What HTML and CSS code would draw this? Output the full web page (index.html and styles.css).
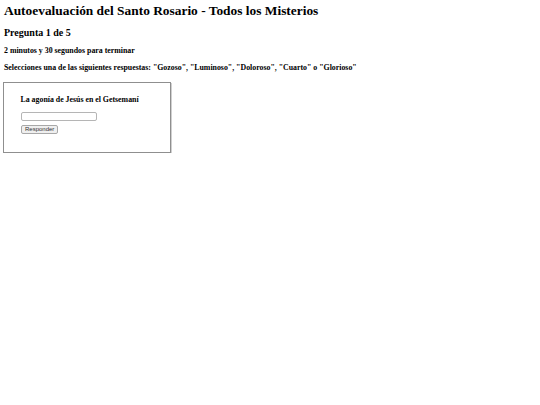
FILE: index.html
```html
<!DOCTYPE html>
<html lang="es">
<head>
<meta charset="utf-8">
<title>Autoevaluación del Santo Rosario</title>
<link rel="stylesheet" href="styles.css">
</head>
<body>
<main class="page">
  <h1 class="title">Autoevaluación del Santo Rosario - Todos los Misterios</h1>
  <h2 class="counter">Pregunta 1 de 5</h2>
  <p class="timer">2 minutos y 30 segundos para terminar</p>
  <p class="instructions">Selecciones una de las siguientes respuestas: "Gozoso", "Luminoso", "Doloroso", "Cuarto" o "Glorioso"</p>
  <form class="quiz-box">
    <p class="question">La agonía de Jesús en el Getsemaní</p>
    <input class="answer" type="text">
    <button class="submit" type="button">Responder</button>
  </form>
</main>
</body>
</html>
```
FILE: styles.css
```css
html, body {
  margin: 0;
  padding: 0;
  background: #ffffff;
}
.page {
  padding: 3px 4px 0 4px;
  font-family: "Liberation Serif", "Times New Roman", serif;
  color: #000;
}
.title {
  font-size: 13.4px;
  font-weight: bold;
  margin: 0 0 8px 0;
  line-height: 16px;
}
.counter {
  font-size: 10px;
  font-weight: bold;
  margin: 0 0 6.6px 0;
  line-height: 12px;
}
.timer {
  font-size: 7.85px;
  font-weight: bold;
  margin: 0 0 7.75px 0;
  line-height: 10px;
}
.instructions {
  font-size: 7.85px;
  font-weight: bold;
  margin: 0 0 8.65px 0;
  line-height: 10px;
}
.quiz-box {
  box-sizing: border-box;
  width: 168px;
  height: 71px;
  margin-left: -1px;
  border: 1px solid #8f8f8f;
  box-shadow: 1px 1px 0 #d0d0d0;
  padding: 11.65px 16.5px 0 16.5px;
  display: flex;
  flex-direction: column;
  align-items: flex-start;
}
.question {
  font-size: 7.85px;
  font-weight: bold;
  margin: 0 0 7.65px 0;
  line-height: 10px;
}
.answer {
  width: 76px;
  height: 8.5px;
  box-sizing: border-box;
  border: 1px solid #b5b5b5;
  border-radius: 2px;
  padding: 0;
  margin: 0 0 4.2px 0;
  background: #fff;
}
.submit {
  font-family: "Liberation Sans", Arial, sans-serif;
  font-size: 6px;
  line-height: 7px;
  height: 9px;
  padding: 0 3px;
  margin: 0 0 0 0.5px;
  border: 1px solid #a8a8a8;
  border-radius: 2px;
  background: #efefef;
  color: #333;
}
```
